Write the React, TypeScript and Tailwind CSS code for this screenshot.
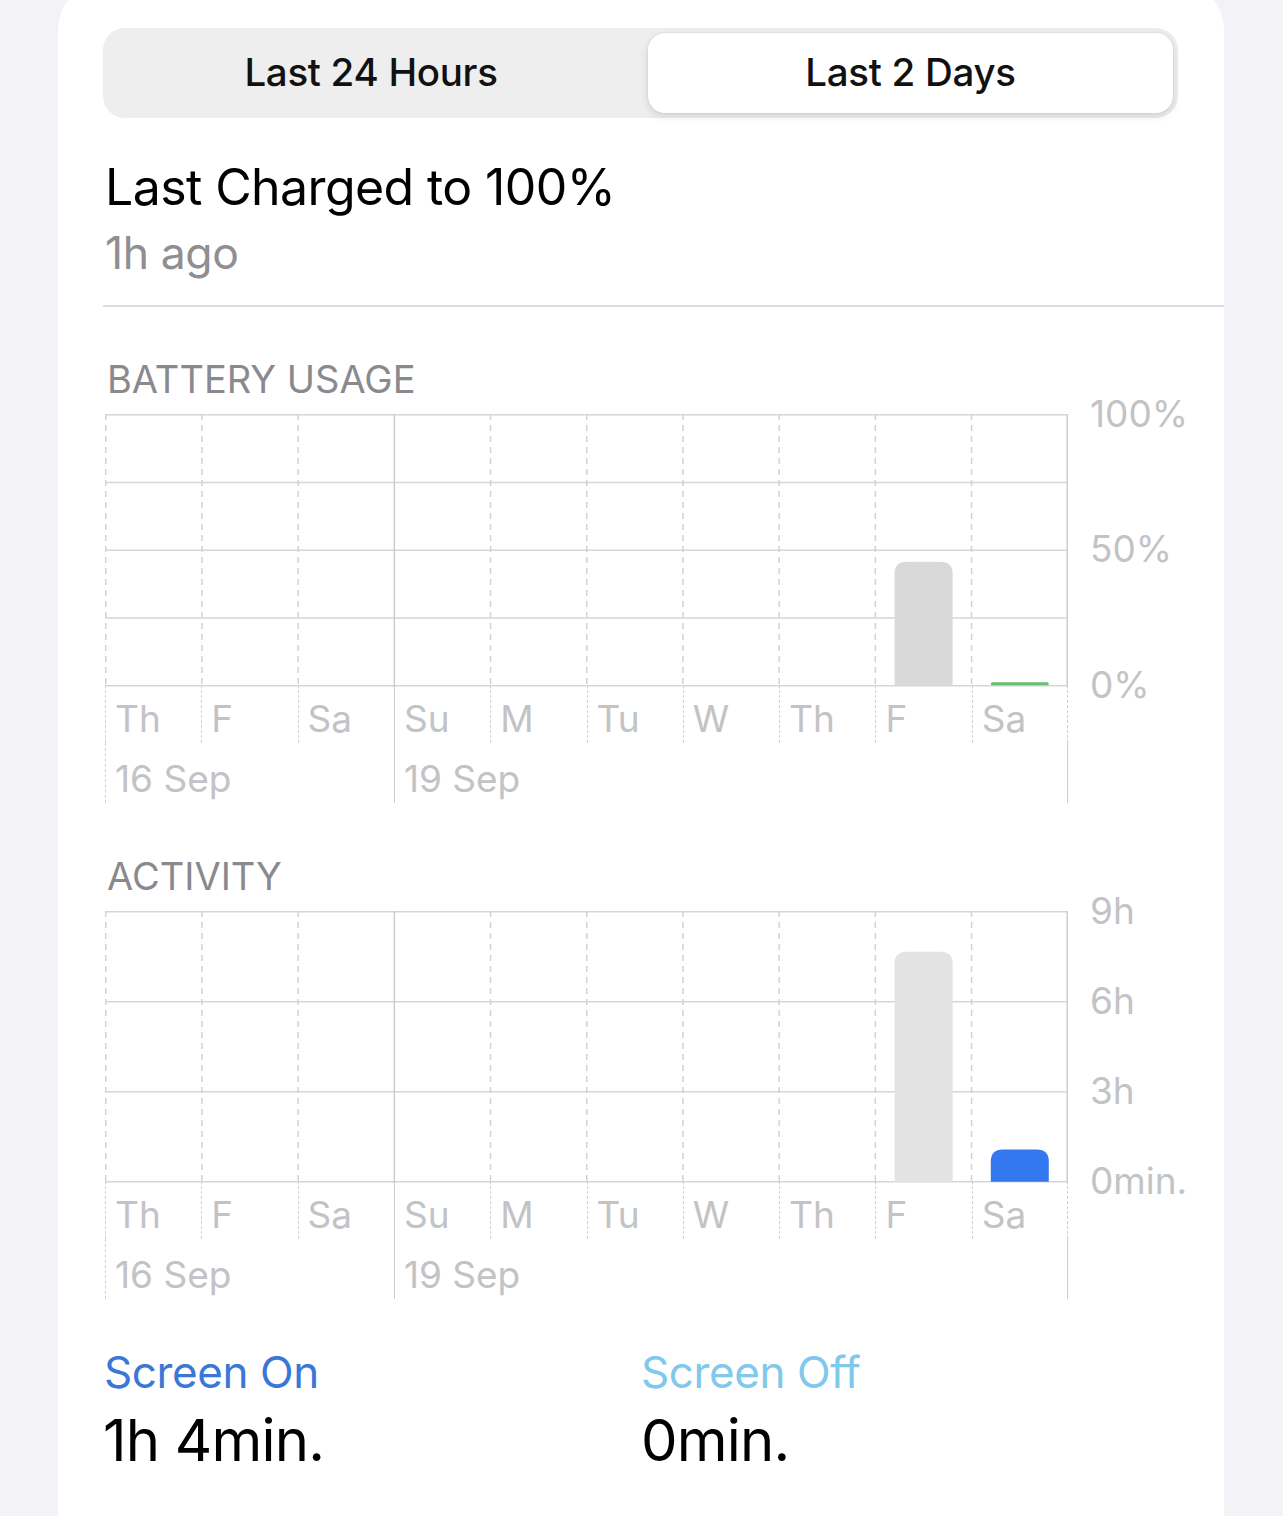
import React from 'react';

const days = ['Th', 'F', 'Sa', 'Su', 'M', 'Tu', 'W', 'Th', 'F', 'Sa'];

const COL = 96.2;
const PLOT_W = 963;

type Bar = { col: number; value: number; color: string; flat?: boolean };

function barPath(x: number, w: number, h: number, bottom: number, r: number) {
  const top = bottom - h;
  return `M${x},${bottom} V${top + r} Q${x},${top} ${x + r},${top} H${x + w - r} Q${x + w},${top} ${x + w},${top + r} V${bottom} Z`;
}

function Plot({ height, rows, bars }: { height: number; rows: number; bars: Bar[] }) {
  const bottom = height + 0.75;
  return (
    <svg width={PLOT_W} height={height + 2} className="block">
      {Array.from({ length: rows + 1 }).map((_, k) => {
        const y = 0.75 + (k * height) / rows;
        return <line key={k} x1={0} x2={PLOT_W} y1={y} y2={y} stroke="#d6d6d8" strokeWidth={1.5} />;
      })}
      {Array.from({ length: 11 }).map((_, i) => {
        const x = i === 10 ? PLOT_W - 0.75 : 0.75 + i * COL;
        const solid = i === 3 || i === 10;
        return (
          <line
            key={i}
            x1={x}
            x2={x}
            y1={0}
            y2={height + 2}
            stroke={solid ? '#cdcdcf' : '#d2d2d4'}
            strokeWidth={1.5}
            strokeDasharray={solid ? undefined : '6 5'}
          />
        );
      })}
      {bars.map((b, i) => {
        const x = b.col * COL + 20;
        const w = 58;
        if (b.flat) {
          return <rect key={i} x={x} y={bottom - 3.5} width={w} height={3} rx={1.5} fill={b.color} />;
        }
        const h = b.value * height;
        return <path key={i} d={barPath(x, w, h, bottom, 12)} fill={b.color} />;
      })}
    </svg>
  );
}

function Chart({
  title,
  height,
  rows,
  yLabels,
  bars,
}: {
  title: string;
  height: number;
  rows: number;
  yLabels: string[];
  bars: Bar[];
}) {
  return (
    <div>
      <div className="pl-[4px] text-[38px] leading-[44px] text-[#8a8a8e]">{title}</div>
      <div className="mt-[13px] ml-[2px] flex">
        <div className="w-[963px] shrink-0">
          <Plot height={height} rows={rows} bars={bars} />
          <div className="grid grid-cols-10 -mt-[2px]">
            {days.map((d, i) => (
              <div
                key={i}
                className={`h-[58px] pl-[9px] pt-[14px] text-[37px] leading-[40px] text-[#c3c3c5] ${
                  i === 3 ? 'border-l-[1.5px] border-solid border-[#cdcdcf]' : 'border-l-[1.5px] border-dashed border-[#d2d2d4]'
                } ${i === 9 ? 'border-r-[1.5px] border-r-solid border-r-[#cdcdcf]' : ''}`}
              >
                {d}
              </div>
            ))}
            <div className="col-span-3 h-[60px] border-l-[1.5px] border-dashed border-[#d2d2d4] pl-[9px] pt-[16px] text-[37px] leading-[40px] text-[#c3c3c5]">
              16 Sep
            </div>
            <div className="col-span-7 h-[60px] border-x-[1.5px] border-solid border-[#cdcdcf] pl-[9px] pt-[16px] text-[37px] leading-[40px] text-[#c3c3c5]">
              19 Sep
            </div>
          </div>
        </div>
        <div
          className="ml-[22px] -mt-[20px] flex flex-col justify-between text-[37px] leading-[40px] text-[#c3c3c5]"
          style={{ height: height + 40 }}
        >
          {yLabels.map((l) => (
            <div key={l}>{l}</div>
          ))}
        </div>
      </div>
    </div>
  );
}

export default function App() {
  return (
    <div className="min-h-screen overflow-hidden bg-[#f2f2f7] font-['Inter','Noto_Sans',sans-serif] antialiased">
      <div className="ml-[58px] -mt-[20px] h-[1536px] w-[1166px] rounded-t-[50px] bg-white pl-[45px] pt-[48px]">
        {/* segmented control */}
        <div className="flex h-[90px] w-[1075px] rounded-[22px] bg-[#eeeeef] p-[5px]">
          <div className="flex flex-1 items-center justify-center pr-[14px] text-[38.5px] font-medium tracking-[-0.3px] text-[#111]">
            Last 24 Hours
          </div>
          <div className="flex w-[525px] items-center justify-center rounded-[17px] bg-white text-[38.5px] font-medium tracking-[-0.3px] text-[#111] shadow-[0_3px_8px_rgba(0,0,0,0.12),0_0_0_1px_rgba(0,0,0,0.03)]">
            Last 2 Days
          </div>
        </div>

        <div className="mt-[39px] pl-[2px] text-[50px] leading-[60px] tracking-[-0.6px] text-black">
          Last Charged to 100%
        </div>
        <div className="mt-[6px] pl-[2px] text-[44.5px] leading-[60px] tracking-[-0.4px] text-[#8e8e93]">1h ago</div>
        <div className="mt-[22px] h-[1.5px] bg-[#dcdcde]" />

        <div className="mt-[50px]">
          <Chart
            title="BATTERY USAGE"
            height={271}
            rows={4}
            yLabels={['100%', '50%', '0%']}
            bars={[
              { col: 8, value: 0.458, color: '#d9d9d9' },
              { col: 9, value: 0, color: '#6abf6f', flat: true },
            ]}
          />
        </div>

        <div className="mt-[51px]">
          <Chart
            title="ACTIVITY"
            height={270}
            rows={3}
            yLabels={['9h', '6h', '3h', '0min.']}
            bars={[
              { col: 8, value: 0.852, color: '#e3e3e3' },
              { col: 9, value: 0.119, color: '#3478f0' },
            ]}
          />
        </div>

        <div className="mt-[48px] flex">
          <div className="w-[538px]">
            <div className="pl-[1px] text-[44px] leading-[50px] tracking-[-0.4px] text-[#3a78d8]">Screen On</div>
            <div className="mt-[10px] text-[58px] leading-[66px] tracking-[-0.8px] text-black">1h 4min.</div>
          </div>
          <div>
            <div className="text-[44px] leading-[50px] tracking-[-0.4px] text-[#80c8ec]">Screen Off</div>
            <div className="mt-[10px] text-[58px] leading-[66px] tracking-[-0.8px] text-black">0min.</div>
          </div>
        </div>
      </div>
    </div>
  );
}
